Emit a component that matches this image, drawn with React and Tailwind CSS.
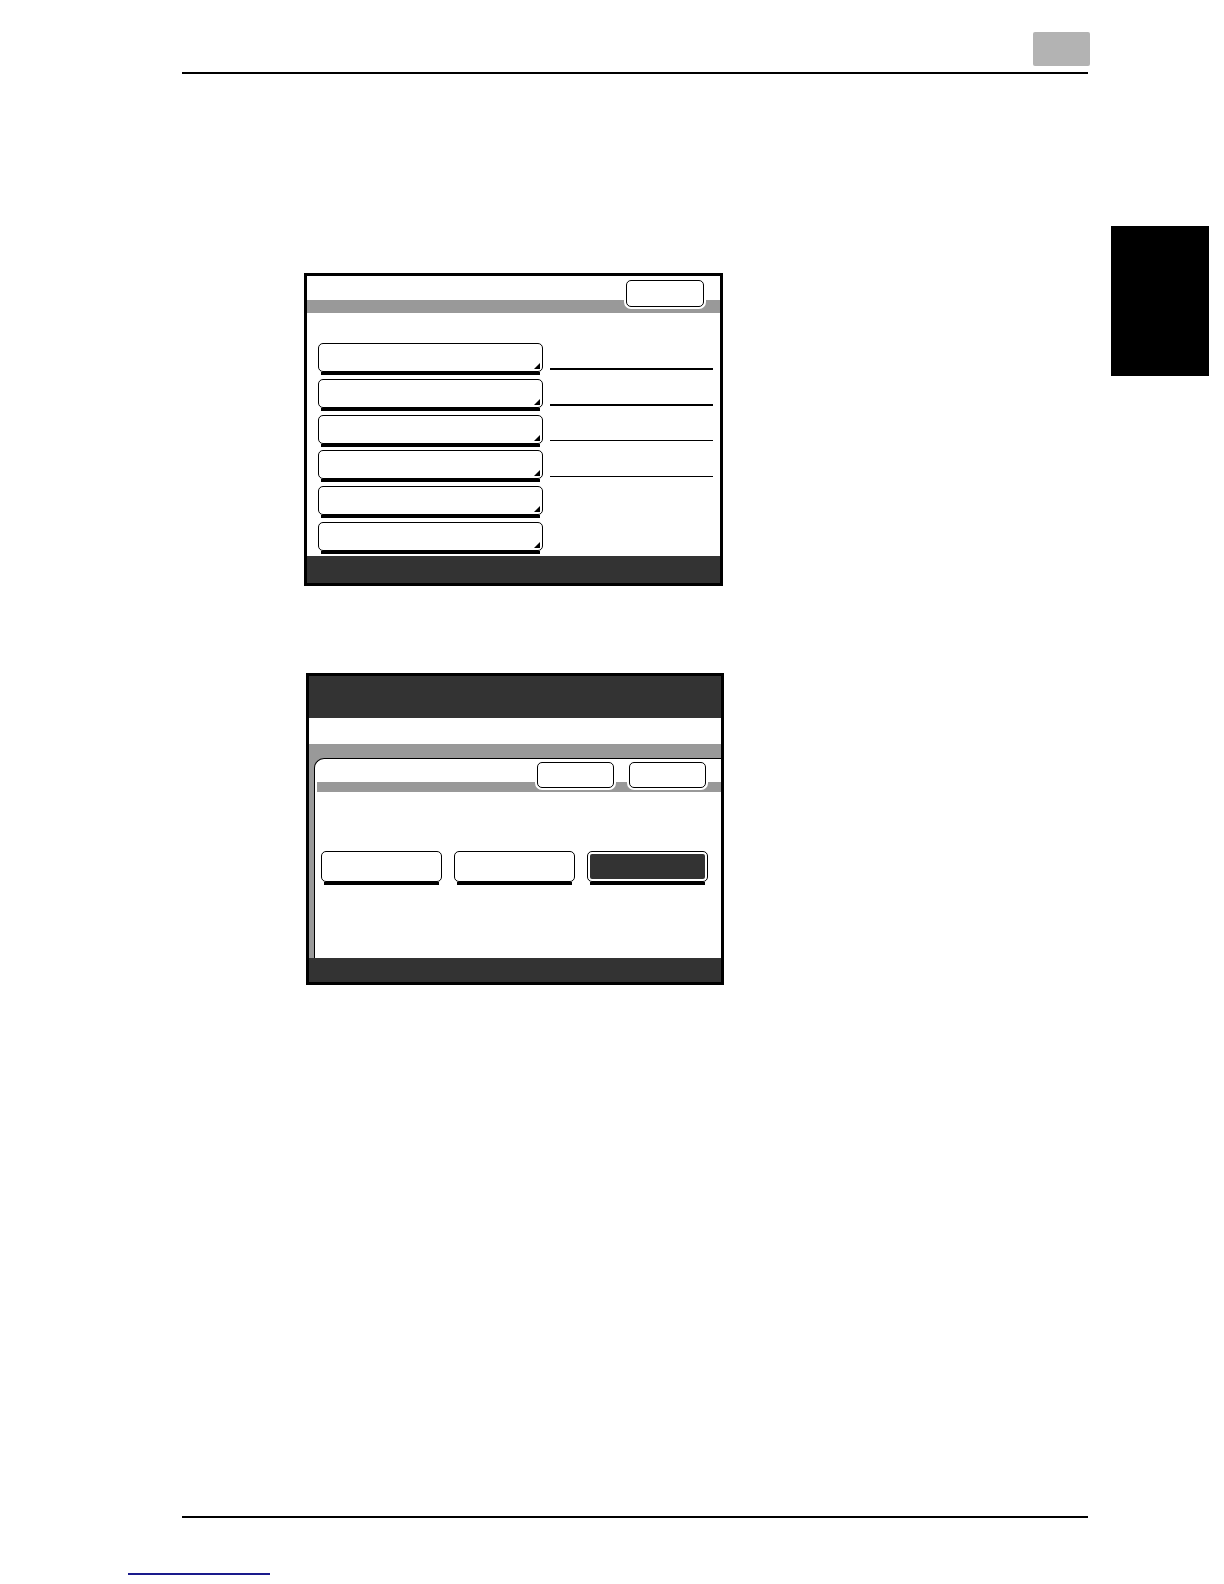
import React from 'react';

function ListButton() {
  return (
    <div className="flex flex-col">
      <div className="relative h-[29px] w-[225px] rounded-[5px] border-[1.5px] border-black bg-white">
        <svg className="absolute bottom-[2px] right-[2px]" width="6" height="6" viewBox="0 0 6 6">
          <polygon points="6,0 6,6 0,6" fill="#000" />
        </svg>
      </div>
      <div className="mx-[3px] h-[3px] bg-black" />
    </div>
  );
}

function TabButton() {
  return (
    <div className="h-[26px] w-[77px] rounded-[5px] border-[1.5px] border-black bg-white shadow-[0_0_0_2px_#fff]" />
  );
}

function OptionButton({ active }) {
  return (
    <div className="flex flex-col">
      <div
        className={
          active
            ? 'h-[31px] w-[121px] rounded-[5px] border-[1.5px] border-black bg-white p-[2px]'
            : 'h-[31px] w-[121px] rounded-[5px] border-[1.5px] border-black bg-white'
        }
      >
        {active && <div className="h-full w-full rounded-[2px] bg-[#333]" />}
      </div>
      <div className="mx-[3px] h-[3px] bg-black" />
    </div>
  );
}

function SettingScreen() {
  return (
    <div className="flex h-[313px] w-[419px] flex-col border-[3px] border-black bg-white">
      {/* title + grey bar */}
      <div className="relative flex h-[37px] flex-col">
        <div className="h-[24px] bg-white" />
        <div className="h-[13px] bg-[#999]" />
        <div className="absolute right-[16px] top-[4px] h-[27px] w-[78px] rounded-[5px] border-[1.5px] border-black bg-white shadow-[0_0_0_2px_#fff]" />
      </div>

      {/* list + value lines */}
      <div className="flex h-[243px] pl-[11px] pt-[30px]">
        <div className="flex flex-col gap-[3.8px]">
          <ListButton />
          <ListButton />
          <ListButton />
          <ListButton />
          <ListButton />
          <ListButton />
        </div>
        <div className="ml-[7px] flex w-[163px] flex-col">
          <div className="mt-[25px] h-[2px] bg-black" />
          <div className="mt-[34px] h-[2px] bg-black" />
          <div className="mt-[34px] h-px bg-black" />
          <div className="mt-[35px] h-px bg-black" />
        </div>
      </div>

      <div className="flex-1 bg-[#333]" />
    </div>
  );
}

function ConfirmScreen() {
  return (
    <div className="flex h-[312px] w-[418px] flex-col overflow-hidden border-[3px] border-black bg-white">
      <div className="h-[42px] bg-[#333]" />
      <div className="h-[26px] bg-white" />

      {/* grey frame with inner panel */}
      <div className="flex h-[214px] flex-col bg-[#999] pl-[5px] pt-[14px]">
        <div className="flex flex-1 flex-col rounded-tl-[10px] border-l-[1.5px] border-t-[1.5px] border-black bg-white">
          <div className="relative flex h-[33px] flex-col">
            <div className="h-[23px]" />
            <div className="ml-[2px] h-[10px] bg-[#999]" />
            <div className="absolute right-[15px] top-[3px] flex gap-[15px]">
              <TabButton />
              <TabButton />
            </div>
          </div>
          <div className="flex gap-[12px] pl-[6px] pt-[59px]">
            <OptionButton />
            <OptionButton />
            <OptionButton active />
          </div>
        </div>
      </div>

      <div className="flex-1 bg-[#333]" />
    </div>
  );
}

export default function App() {
  return (
    <div className="flex h-[1584px] w-[1224px] flex-col bg-white font-['Liberation_Sans',sans-serif]">
      {/* running header */}
      <div className="ml-[182px] mt-[32px] flex h-[42px] w-[906px] items-start justify-end border-b-2 border-black">
        <div className="mr-[-2px] h-[34px] w-[57px] rounded-[2px] bg-[#b3b3b3]" />
      </div>

      <div className="flex">
        <div className="ml-[304px] mt-[199px] flex flex-col">
          <SettingScreen />
          <div className="ml-[2px] mt-[87px]">
            <ConfirmScreen />
          </div>
        </div>
        {/* chapter tab */}
        <div className="ml-auto mr-[15px] mt-[152px] h-[150px] w-[98px] bg-black" />
      </div>

      {/* running footer */}
      <div className="ml-[182px] mt-[531px] w-[906px] border-t-2 border-black" />
      <div className="ml-[128px] mt-[55px] h-[2px] w-[142px] bg-[#1a1a8c]" />
    </div>
  );
}
